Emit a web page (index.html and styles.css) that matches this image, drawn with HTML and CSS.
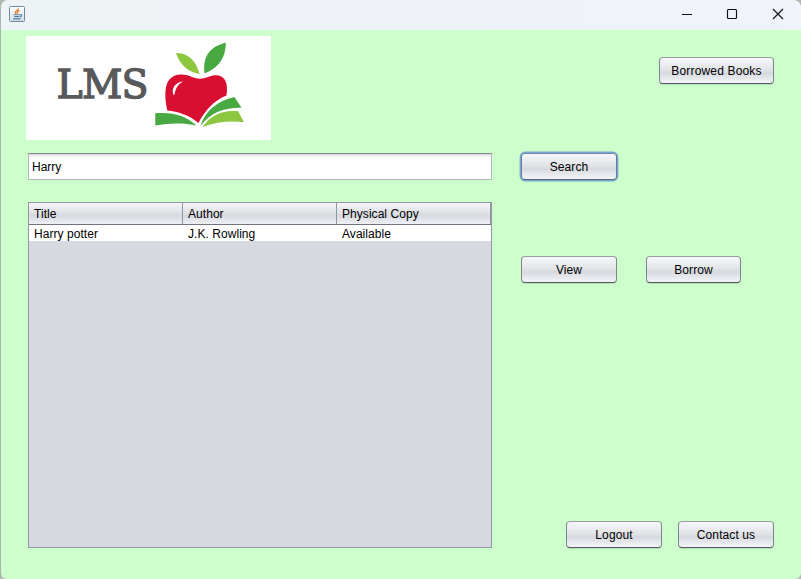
FILE: index.html
```html
<!DOCTYPE html>
<html lang="en">
<head>
<meta charset="utf-8">
<title>Library</title>
<link rel="stylesheet" href="styles.css">
</head>
<body>
<div class="window">
  <header class="titlebar">
    <svg class="java" width="16" height="16" viewBox="0 0 16 16">
      <defs><linearGradient id="jb" x1="0" y1="0" x2="0" y2="1"><stop offset="0" stop-color="#fff"/><stop offset="1" stop-color="#d3dde6"/></linearGradient></defs>
      <rect x=".5" y=".5" width="15" height="15" rx="1" fill="url(#jb)" stroke="#718a9f"/>
      <path d="M9.3 2.5C9.5 4.5 6 5 6.4 6.5Q6.6 7.4 7.5 8M10.5 4.7C8.2 5.5 8 6.3 8.7 7.3" fill="none" stroke="#ec8130" stroke-width="1.4"/>
      <path d="M4.3 8.8H11M5.200 10.600H10.200M4 12.900H11.500M11 9Q13.800 8.300 12.300 10.300L10.800 11" fill="none" stroke="#537fa4" stroke-width="1.1"/>
    </svg>
    <svg class="controls" width="104" height="12" viewBox="0 0 104 12">
      <path d="M0 6.5H10" stroke="#111" fill="none"/>
      <rect x="45.5" y="1.5" width="9" height="9" rx="1" stroke="#111" stroke-width="1.15" fill="none"/>
      <path d="M91 1L101 11M101 1L91 11" stroke="#111" stroke-width="1.15" fill="none"/>
    </svg>
  </header>
  <main class="content">
    <section class="left">
      <svg class="logo" width="245" height="104" viewBox="26 36 245 104">
        <rect x="26" y="36" width="245" height="104" fill="#fff"/>
        <text class="logo-text" x="56.500 82 121.500" y="98.200">LMS</text>
        <path d="M176 53Q194 53 199.500 74Q182 71 176 53Z" fill="#8dc63f"/>
        <path d="M225.800 42.500Q201 49 204.500 73.500Q226 65 225.800 42.500Z" fill="#48a942"/>
        <path d="M167.300 110.500C164 96 165 84 169.500 79.500C176 72 187 74.500 192 77Q200 80.500 208 77C215 74 222 74.500 225 80Q228 85 226.500 95.500C214 100 204 112 198.500 123C189 115 178 111.500 167.300 110.500Z" fill="#d90f32"/>
        <path d="M173.500 95C171 89 175 82 183 81.500C177.500 84.500 175.500 89 174.500 94.500Z" fill="#fff"/>
        <path d="M155.300 113.300C174 112 185 115.500 196.500 125.500C183 122.500 169 123 155.300 125.500Z" fill="#48a942"/>
        <path d="M200.500 126C205 111 217 101 234.500 97L241.500 107.700C224 107.500 211 112 200.500 126Z" fill="#48a942"/>
        <path d="M202.500 127C211 115 222 110 238.200 111.300L244 122.300C230 120.500 217 122 202.500 127Z" fill="#8dc63f"/>
      </svg>
      <input class="field" type="text" value="Harry">
      <div class="table">
        <div class="row head"><span>Title</span><span>Author</span><span>Physical Copy</span></div>
        <div class="row item"><span>Harry potter</span><span>J.K. Rowling</span><span>Available</span></div>
      </div>
    </section>
    <section class="right">
      <div class="actions end"><button class="btn wide">Borrowed Books</button></div>
      <div class="actions search"><button class="btn focused">Search</button></div>
      <div class="actions items"><button class="btn">View</button><button class="btn borrow">Borrow</button></div>
      <div class="actions end bottom"><button class="btn">Logout</button><button class="btn">Contact us</button></div>
    </section>
  </main>
</div>
</body>
</html>
```
FILE: styles.css
```css
* { box-sizing: border-box; }
html { background: #b5b5b5; }
body {
  margin: 0;
  font: 12px/14px "Liberation Sans", Arial, sans-serif;
  color: #000;
}
.window {
  height: 579px;
  overflow: hidden;
  display: flex;
  flex-direction: column;
  border-left: 1px solid #a9b5ab;
  border-radius: 8px 8px 6px 6px;
  background: #cfc;
}
.titlebar {
  height: 30px;
  display: flex;
  justify-content: space-between;
  padding: 6px 15px 0 8px;
  background: linear-gradient(90deg, #eef3f6, #f0f3fa);
}
.controls { margin: 2px 0 0; }
.content {
  flex: 1;
  display: flex;
  justify-content: space-between;
  padding: 6px 27px 31px 25px;
}
.left {
  width: 466px;
  display: flex;
  flex-direction: column;
}
.logo { display: block; }
.logo-text {
  font: 39.5px "DejaVu Serif", serif;
  fill: #58595b;
  stroke: #58595b;
  stroke-width: 1.3px;
}
.field {
  width: 464px;
  height: 27px;
  margin: 13px 0 22px 2px;
  padding: 0 3px;
  font: inherit;
  color: inherit;
  border: 1px solid #b3b7bb;
  border-top-color: #85888e;
  border-radius: 0;
  outline: none;
  background: linear-gradient(#d6d6da, #fff 3px);
}
.table {
  width: 464px;
  height: 346px;
  margin-left: 2px;
  border: 1px solid #9297a1;
  background: #d6d9e0;
}
.row {
  display: grid;
  grid-template-columns: 154px 154px 154px;
  letter-spacing: .05px;
}
.row span { padding-left: 5px; }
.head {
  height: 22px;
  line-height: 21px;
  border-bottom: 1px solid #71747f;
  background: linear-gradient(#f5f6f8, #e0e2e6 45%, #d6d9df 60%, #eef0f4);
}
.head span { height: 21px; padding-top: 1px; border-right: 1px solid #91959e; }
.item {
  height: 16px;
  line-height: 18px;
  background: #fff;
}
.right {
  width: 253px;
  display: flex;
  flex-direction: column;
  padding-top: 21px;
}
.actions { display: flex; }
.end { justify-content: flex-end; gap: 16px; }
.search { margin-top: 69px; }
.items { margin-top: 76px; gap: 29px; }
.bottom { margin-top: auto; }
.btn {
  width: 96px;
  height: 27px;
  padding: 0;
  font: inherit;
  color: inherit;
  letter-spacing: .1px;
  border: 1px solid #7f828b;
  border-color: #999ca2 #7f828b #565961;
  border-radius: 4px;
  background: linear-gradient(#f6f7f9, #e2e4e8 46%, #d6d9df 60%, #f3f5f8);
  box-shadow: 0 1px 0 #b4deb8;
}
.borrow { width: 95px; }
.wide { width: 115px; letter-spacing: .17px; }
.focused { box-shadow: 0 0 0 1.4px #77a9d0; border-color: #7187a5 #647b9a #53677f; }
```
